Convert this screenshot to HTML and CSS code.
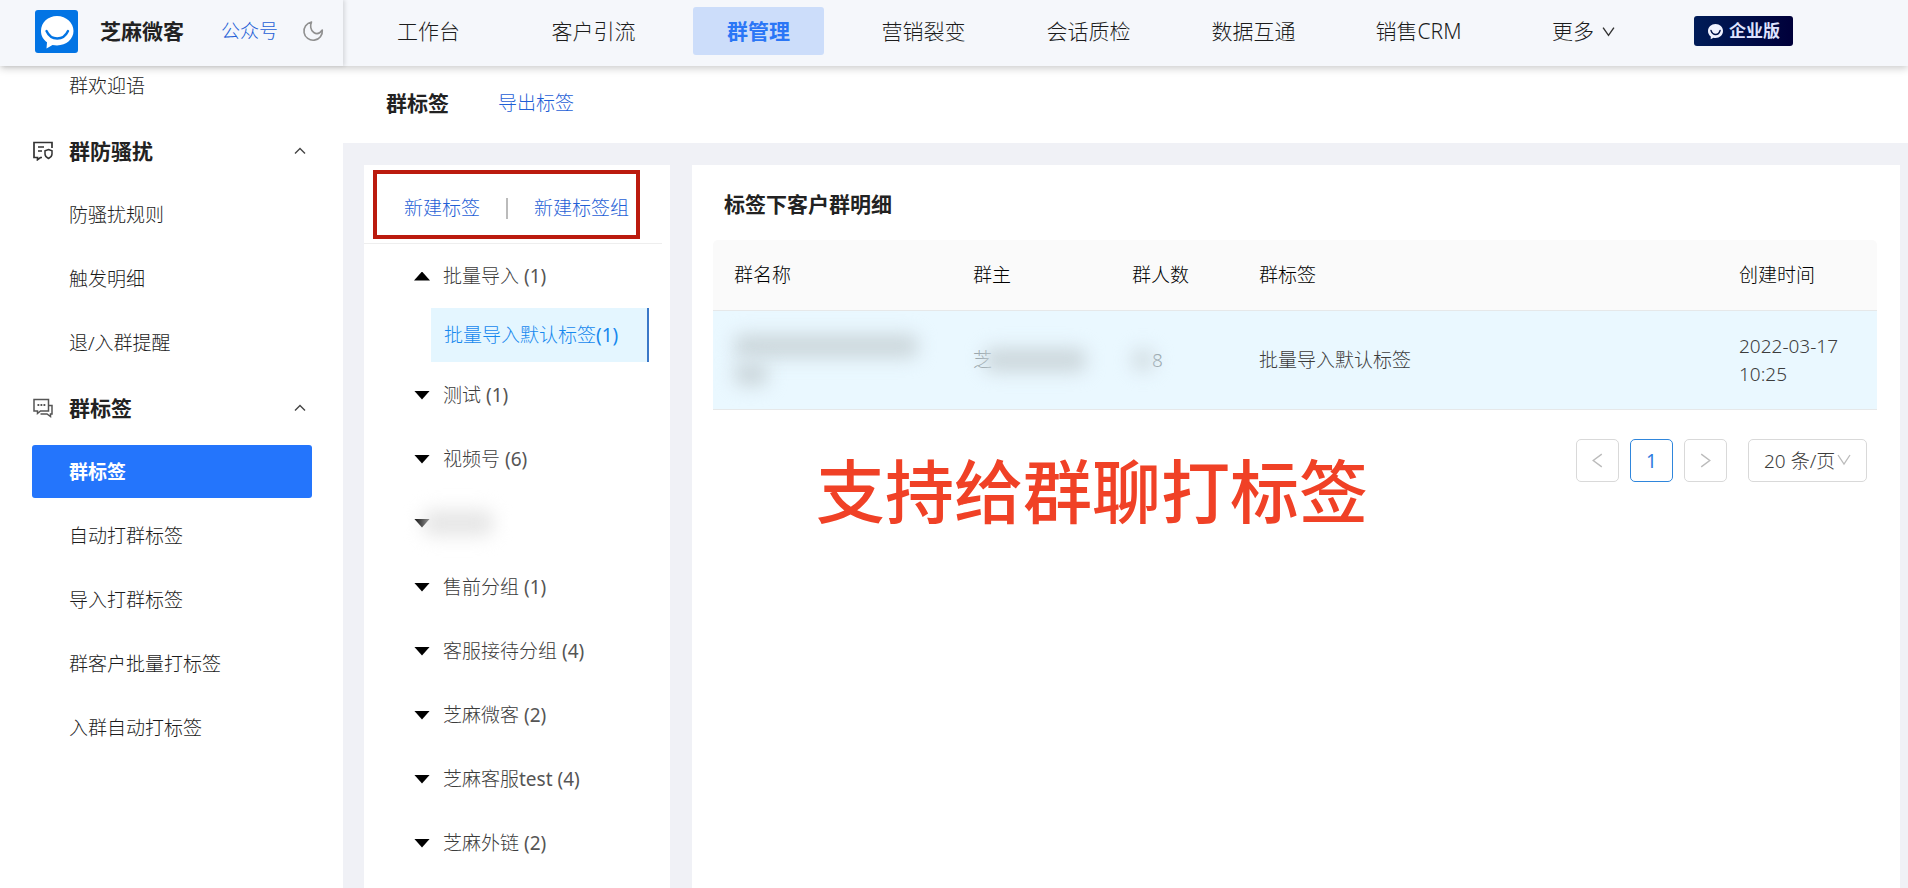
FILE: index.html
```html
<!DOCTYPE html>
<html lang="zh-CN">
<head>
<meta charset="utf-8">
<title>群标签 - 芝麻微客</title>
<link rel="stylesheet" href="styles.css">
</head>
<body>
<div class="app">
  <header class="topbar">
    <div class="brand">
      <svg class="brand-logo" viewBox="0 0 43 43" aria-hidden="true">
        <rect width="43" height="43" rx="3" fill="#0274e4"/>
        <path d="M22 6C13 6 6 12.500 6 21c0 5 2.300 8.500 6 11.200L11.500 38.500l6-3.500c1.500.3 3 .4 4.500.4C31.500 35.400 38.500 29 38.500 21S31.500 6 22 6z" fill="#fff"/>
        <path d="M11.500 21c2.500 5.500 6.500 7.500 10.700 7.500S30.500 26.500 33 21" fill="none" stroke="#0274e4" stroke-width="2.400" stroke-linecap="round"/>
      </svg>
      <strong class="brand-name">芝麻微客</strong>
      <a class="brand-link" href="#">公众号</a>
      <button class="icon-button" type="button" aria-label="夜间模式">
        <svg class="moon" viewBox="0 0 22 22" aria-hidden="true"><path d="M9.500 2A9.200 9.200 0 1 0 20.300 10C18 13.300 14.800 14.500 11.800 12.500C8.300 10.200 8 5.500 9.500 2z" fill="none" stroke="#909090" stroke-width="1.600" stroke-linejoin="round"/></svg>
      </button>
    </div>
    <nav class="mainnav">
      <a href="#">工作台</a>
      <a href="#">客户引流</a>
      <a href="#" class="is-active" aria-current="page">群管理</a>
      <a href="#">营销裂变</a>
      <a href="#">会话质检</a>
      <a href="#">数据互通</a>
      <a href="#">销售CRM</a>
      <a href="#">更多
        <svg class="more-arrow" viewBox="0 0 12 12" aria-hidden="true"><path d="M1 2.500l5 7 5-7" fill="none" stroke="#333" stroke-width="1.300"/></svg>
      </a>
    </nav>
    <span class="edition">
      <svg class="edition-icon" viewBox="0 0 17 17" aria-hidden="true">
        <path d="M8.500 1C4.300 1 1 4 1 8c0 2.300 1 4.200 2.800 5.500L3.700 16.200 6.500 14.700c.6.200 1.300.2 2 .2C12.800 14.900 16 12 16 8S12.800 1 8.500 1z" fill="#f0f2ff"/>
        <path d="M4 7.500c1 3 2.800 4 4.600 4s3.600-1 4.500-4" fill="none" stroke="#001248" stroke-width="1.400" stroke-linecap="round"/>
      </svg>
      企业版
    </span>
  </header>

  <div class="body">
    <nav class="sidebar">
      <a class="side-item" href="#">群欢迎语</a>
      <button class="side-group" type="button" aria-expanded="true">
        <svg class="side-icon" viewBox="0 0 20 20" aria-hidden="true"><path d="M9 16.500H7.500L4.500 18.700V16.500H1V1.500H19V7M5 6h6M5 10h4" fill="none" stroke="#333" stroke-width="1.700"/><path d="M15.500 8.500l3.500 1.300v3.200c0 2-1.500 3.500-3.500 4.500-2-1-3.500-2.500-3.500-4.500V9.800z" fill="none" stroke="#333" stroke-width="1.500"/></svg>
        <span class="side-title">群防骚扰</span>
        <svg class="side-arrow" viewBox="0 0 12 12" aria-hidden="true"><path d="M1 8.500L6 3.500l5 5" fill="none" stroke="#444" stroke-width="1.400"/></svg>
      </button>
      <a class="side-item" href="#">防骚扰规则</a>
      <a class="side-item" href="#">触发明细</a>
      <a class="side-item" href="#">退/入群提醒</a>
      <button class="side-group" type="button" aria-expanded="true">
        <svg class="side-icon" viewBox="0 0 20 20" aria-hidden="true"><path d="M1 1.500H15.500V13H7.500L4.500 15.500V13H1z" fill="none" stroke="#555" stroke-width="1.500"/><path d="M18 7.500h1v8.500h-1.500V18.500L14 16H7.500M15.500 7.500H19" fill="none" stroke="#555" stroke-width="1.500"/><path d="M4.500 7h1.800M7.500 7h1.800M10.500 7h1.800" stroke="#555" stroke-width="1.800"/></svg>
        <span class="side-title">群标签</span>
        <svg class="side-arrow" viewBox="0 0 12 12" aria-hidden="true"><path d="M1 8.500L6 3.500l5 5" fill="none" stroke="#444" stroke-width="1.400"/></svg>
      </button>
      <a class="side-item is-active" href="#" aria-current="page">群标签</a>
      <a class="side-item" href="#">自动打群标签</a>
      <a class="side-item" href="#">导入打群标签</a>
      <a class="side-item" href="#">群客户批量打标签</a>
      <a class="side-item" href="#">入群自动打标签</a>
    </nav>

    <main class="main">
      <div class="page-head">
        <h1 class="page-title">群标签</h1>
        <a class="page-link" href="#">导出标签</a>
      </div>

      <div class="panels">
        <section class="tag-panel">
          <div class="tag-actions">
            <button class="text-button" type="button">新建标签</button>
            <span class="divider"></span>
            <button class="text-button" type="button">新建标签组</button>
            <span class="highlight" aria-hidden="true"></span>
          </div>
          <ul class="tree">
            <li><button class="tree-row is-open" type="button" aria-expanded="true"><span>批量导入 <span class="count">(1)</span></span></button>
              <button class="tree-leaf" type="button">批量导入默认标签<span class="count">(1)</span></button></li>
            <li><button class="tree-row" type="button"><span>测试 <span class="count">(1)</span></span></button></li>
            <li><button class="tree-row" type="button"><span>视频号 <span class="count">(6)</span></span></button></li>
            <li><button class="tree-row" type="button" aria-label="已隐藏分组"><span class="smudge smudge-group"></span></button></li>
            <li><button class="tree-row" type="button"><span>售前分组 <span class="count">(1)</span></span></button></li>
            <li><button class="tree-row" type="button"><span>客服接待分组 <span class="count">(4)</span></span></button></li>
            <li><button class="tree-row" type="button"><span>芝麻微客 <span class="count">(2)</span></span></button></li>
            <li><button class="tree-row" type="button"><span>芝麻客服<span class="count">test (4)</span></span></button></li>
            <li><button class="tree-row" type="button"><span>芝麻外链 <span class="count">(2)</span></span></button></li>
          </ul>
        </section>

        <section class="detail-panel">
          <h2 class="detail-title">标签下客户群明细</h2>
          <table class="grid">
            <colgroup><col class="col-name"><col class="col-owner"><col class="col-count"><col><col class="col-time"></colgroup>
            <thead>
              <tr><th>群名称</th><th>群主</th><th>群人数</th><th>群标签</th><th>创建时间</th></tr>
            </thead>
            <tbody>
              <tr>
                <td><span class="smudge smudge-name"></span><span class="smudge smudge-name-rest"></span></td>
                <td><span class="masked"><span class="faint">芝</span><span class="smudge smudge-owner"></span></span></td>
                <td><span class="masked"><span class="smudge smudge-count"></span><span class="faint">8</span></span></td>
                <td>批量导入默认标签</td>
                <td>2022-03-17 10:25</td>
              </tr>
            </tbody>
          </table>
          <div class="pager">
            <button class="page-button" type="button" aria-label="上一页"><svg class="page-arrow" viewBox="0 0 14 14" aria-hidden="true"><path d="M11 1L3 7l8 6" fill="none" stroke="#bbb" stroke-width="1.300"/></svg></button>
            <button class="page-button is-current" type="button">1</button>
            <button class="page-button" type="button" aria-label="下一页"><svg class="page-arrow" viewBox="0 0 14 14" aria-hidden="true"><path d="M3 1l8 6-8 6" fill="none" stroke="#bbb" stroke-width="1.300"/></svg></button>
            <div class="page-size">
              <select aria-label="每页条数"><option>20 条/页</option></select>
              <svg class="page-size-arrow" viewBox="0 0 14 14" aria-hidden="true"><path d="M1 2l6 9 6-9" fill="none" stroke="#bbb" stroke-width="1.300"/></svg>
            </div>
          </div>
          <p class="caption">支持给群聊打标签</p>
        </section>
      </div>
    </main>
  </div>
</div>
</body>
</html>
```

FILE: styles.css
```css
* { box-sizing: border-box; }

body {
  margin: 0;
  background: #fff;
  color: #1c1c1c;
  font: 300 19px/28px "Segoe UI", "Noto Sans", "Noto Sans CJK SC", sans-serif;
}

a { color: inherit; text-decoration: none; }
h1, h2, p, ul { margin: 0; padding: 0; }
ul { list-style: none; }

button, select {
  margin: 0;
  padding: 0;
  border: 0;
  background: none;
  color: inherit;
  font: inherit;
  cursor: pointer;
}

svg { display: block; flex: none; }

.app {
  display: flex;
  flex-direction: column;
  height: 100vh;
  overflow: hidden;
}

/* Top bar */
.topbar {
  position: relative;
  z-index: 2;
  display: flex;
  flex: none;
  align-items: center;
  height: 66px;
  padding-bottom: 4px;
  background: #f5f7fb;
  box-shadow: 0 2px 8px rgba(0, 0, 0, 0.22);
}

.brand {
  display: flex;
  flex: none;
  align-items: center;
  width: 343px;
  height: 66px;
  margin-bottom: -4px;
  padding: 0 19px 4px 35px;
  box-shadow: 2px 0 4px rgba(0, 0, 0, 0.12);
}

.brand-logo { width: 43px; height: 43px; }
.brand-name { margin-left: 22px; color: #222; font-size: 21px; font-weight: 700; }
.brand-link { margin-left: 37px; color: #1f5fd6; }
.icon-button { margin-left: auto; }
.moon { width: 22px; height: 22px; }

.mainnav {
  display: flex;
  gap: 34px;
  padding-left: 20px;
}

.mainnav a {
  display: flex;
  align-items: center;
  justify-content: center;
  gap: 8px;
  width: 131px;
  height: 48px;
  border-radius: 3px;
  font-size: 21px;
}

.mainnav .is-active { background: #ccddfa; color: #2a76f6; font-weight: 700; }
.more-arrow { width: 13px; height: 13px; }

.edition {
  display: flex;
  align-items: center;
  justify-content: center;
  gap: 5px;
  width: 99px;
  height: 30px;
  margin-left: 45px;
  border-radius: 3px;
  background: linear-gradient(90deg, #001c58, #00003a);
  color: #dfe3ff;
  font-size: 17px;
  font-weight: 700;
}

.edition-icon { width: 17px; height: 17px; }

/* Layout */
.body { display: flex; flex: 1; min-height: 0; }

.sidebar {
  display: flex;
  flex: none;
  flex-direction: column;
  gap: 11px;
  width: 343px;
  margin-top: -7px;
  padding: 0 31px 0 32px;
}

.side-item {
  flex: none;
  height: 53px;
  padding-left: 37px;
  border-radius: 3px;
  line-height: 55px;
}

.side-item.is-active { background: #2475fc; color: #fff; font-weight: 700; }

.side-group {
  display: flex;
  flex: none;
  align-items: center;
  height: 54px;
  padding: 2px 6px 0 1px;
  text-align: left;
}

.side-icon { width: 20px; height: 20px; }
.side-title { flex: 1; margin-left: 16px; color: #222; font-size: 21px; font-weight: 700; }
.side-arrow { width: 12px; height: 12px; }

.main {
  display: flex;
  flex: 1;
  flex-direction: column;
  min-width: 0;
  background: #f0f1f6;
}

.page-head {
  display: flex;
  flex: none;
  align-items: center;
  gap: 49px;
  height: 77px;
  padding: 0 0 3px 43px;
  background: #fff;
}

.page-title { color: #222; font-size: 21px; font-weight: 700; }
.page-link { color: #1f5fd6; }

.panels {
  display: flex;
  flex: 1;
  gap: 22px;
  min-height: 0;
  padding: 22px 8px 0 21px;
}

/* Tag tree */
.tag-panel { flex: none; width: 306px; background: #fff; }

.tag-actions {
  position: relative;
  display: flex;
  align-items: center;
  justify-content: space-between;
  height: 79px;
  margin-right: 8px;
  padding: 8px 33px 0 40px;
  border-bottom: 1px solid #eee;
}

.text-button { color: #1f5fd6; }
.divider { width: 2px; height: 21px; background: #bbb; }

.highlight {
  position: absolute;
  top: 5px;
  right: 22px;
  bottom: 4px;
  left: 9px;
  border: 4px solid #bb1a0e;
  pointer-events: none;
}

.tree { color: #3c3c3c; }

.tree-row {
  display: flex;
  align-items: center;
  gap: 13px;
  width: 100%;
  height: 64px;
  padding-left: 50px;
}

.tree-row::before {
  width: 16px;
  height: 9px;
  background: #000;
  clip-path: polygon(0 0, 100% 0, 50% 100%);
  content: "";
}

.tree-row.is-open::before { clip-path: polygon(0 100%, 100% 100%, 50% 0); }
.count { color: #555; font-weight: 400; }

.tree-leaf {
  display: block;
  width: 218px;
  height: 54px;
  margin: 0 0 1px 67px;
  padding-left: 13px;
  border-right: 2px solid #3a78c8;
  background: #e4f6ff;
  color: #1688ee;
  text-align: left;
}

.tree-leaf .count { color: inherit; }

/* Masked values */
.smudge { display: block; border-radius: 8px; background: #ccd7dc; filter: blur(9px); }
.smudge-group { width: 70px; height: 26px; margin-left: -20px; background: #e6e6e6; }
.smudge-name { width: 184px; height: 24px; }
.smudge-name-rest { width: 34px; height: 24px; margin-top: 4px; }
.smudge-owner { width: 102px; height: 24px; margin-left: -8px; }
.smudge-count { width: 22px; height: 22px; margin-right: -2px; background: #d2dde2; }
.masked { display: flex; align-items: center; }
.faint { color: #93a0a6; }

/* Detail table */
.detail-panel {
  position: relative;
  flex: 1;
  min-width: 0;
  padding: 25px 23px 0 21px;
  background: #fff;
}

.detail-title { padding-left: 11px; color: #222; font-size: 21px; font-weight: 700; }

.grid {
  width: 100%;
  margin-top: 22px;
  border-collapse: separate;
  border-spacing: 0;
  table-layout: fixed;
}

.col-name { width: 239px; }
.col-owner, .col-time { width: 159px; }
.col-count { width: 127px; }

.grid th, .grid td {
  padding: 21px;
  border-bottom: 1px solid #e6e8e9;
  text-align: left;
}

.grid th { background: #fafafa; color: #000; font-weight: 300; }
.grid th:first-child { border-top-left-radius: 5px; }
.grid th:last-child { border-top-right-radius: 5px; }
.grid td { background: #eaf8ff; color: #3c3c3c; }
.grid td:nth-child(2), .grid td:nth-child(3) { padding-right: 0; }

.pager {
  display: flex;
  justify-content: flex-end;
  gap: 11px;
  margin: 29px 10px 0 0;
}

.page-button {
  display: flex;
  align-items: center;
  justify-content: center;
  width: 43px;
  height: 43px;
  border: 1px solid #d9d9d9;
  border-radius: 5px;
}

.page-button.is-current { border-color: #2f86dc; color: #2f7be0; font-weight: 400; }
.page-arrow { width: 15px; height: 15px; }
.page-size { position: relative; margin-left: 10px; }

.page-size select {
  width: 119px;
  height: 43px;
  padding-left: 15px;
  border: 1px solid #d9d9d9;
  border-radius: 5px;
  appearance: none;
  color: #3c3c3c;
}

.page-size-arrow {
  position: absolute;
  top: 14px;
  right: 16px;
  width: 14px;
  height: 14px;
  pointer-events: none;
}

.caption {
  position: absolute;
  top: 290px;
  left: 124px;
  color: #f04126;
  font-size: 69px;
  font-weight: 500;
  line-height: 72px;
  white-space: nowrap;
}
```
